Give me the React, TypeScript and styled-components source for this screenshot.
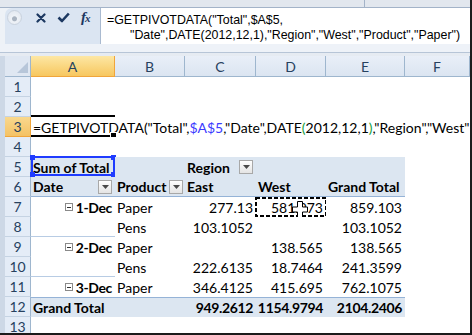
import React from 'react';
import styled, { createGlobalStyle } from 'styled-components';

const GlobalStyle = createGlobalStyle`
  html, body {
    margin: 0;
    padding: 0;
    background: #ffffff;
  }
  body {
    width: 472px;
    height: 335px;
    overflow: hidden;
  }
`;

const Frame = styled.div`
  width: 472px;
  height: 335px;
  box-sizing: border-box;
  border-right: 2px solid #1b1b1b;
  border-bottom: 2px solid #1b1b1b;
  background: #dde5f0;
  display: flex;
  flex-direction: column;
  overflow: hidden;
  font-family: Lato, 'Open Sans', sans-serif;
`;

/* ---------- formula bar ---------- */

const TopStrip = styled.div`
  height: 7px;
  background: #e2e7ee;
  border-bottom: 1px solid #a3b3c8;
  display: flex;
  justify-content: flex-end;
`;

const StripDivider = styled.span`
  width: 1px;
  height: 100%;
  background: #a3b3c8;
  margin-right: 105px;
`;

const FormulaRow = styled.div`
  display: flex;
  height: 36px;
  padding-left: 5px;
  background: #eef2f7;
`;

const Controls = styled.div`
  width: 95px;
  flex-shrink: 0;
  background: #dbe5f2;
  border-top-left-radius: 7px;
  padding: 1px 0 0 2px;
  box-sizing: border-box;
`;

const IconRow = styled.div`
  display: flex;
  align-items: center;
  height: 17px;
  gap: 11px;
`;

const NameHandle = styled.span`
  width: 15px;
  height: 15px;
  border-radius: 50%;
  box-sizing: border-box;
  border: 1px solid #c9d2de;
  background: radial-gradient(circle at 50% 60%, #aab4c1 0 2px, #eef2f7 3px, #dfe5ee 100%);
  margin-right: 3px;
`;

const FxLabel = styled.span`
  font-family: 'Liberation Serif', serif;
  font-style: italic;
  font-weight: 700;
  font-size: 15px;
  color: #1c3861;
  letter-spacing: -1px;
  line-height: 1;
  small {
    font-size: 11px;
  }
`;

const FormulaInput = styled.div`
  flex: 1;
  background: #ffffff;
  border-left: 1px solid #a9bad0;
  padding: 5px 0 0 6px;
  font-family: 'Liberation Sans', Arial, sans-serif;
  font-size: 12.4px;
  line-height: 15px;
  color: #000;
  white-space: nowrap;
`;

const FormulaLine = styled.div<{ $indent?: number }>`
  padding-left: ${p => p.$indent ?? 0}px;
`;

const BelowBar = styled.div`
  height: 8px;
  background: #eef2f8;
  border-bottom: 1px solid #b7c5d7;
`;

const Spacer = styled.div`
  height: 3px;
  background: #e6ebf2;
`;

/* ---------- sheet grid ---------- */

const SheetWrap = styled.div`
  flex: 1;
  padding-left: 5px;
  background: #cdd8e6;
  overflow: hidden;
`;

const Sheet = styled.div`
  display: grid;
  grid-template-columns: 26px 84px 70px 71px 70px 79px minmax(0, 1fr);
  grid-template-rows: 21px;
  grid-auto-rows: 20px;
  background: #ffffff;
  font-size: 14px;
  color: #000;
`;

const Corner = styled.div`
  background: #dfe7f2;
  border-right: 1px solid #9eb6ce;
  border-bottom: 1px solid #9eb6ce;
  display: flex;
  align-items: flex-end;
  justify-content: flex-end;
  padding: 0 2px 3px 0;
`;

const ColHeader = styled.div<{ $active?: boolean }>`
  display: flex;
  align-items: center;
  justify-content: center;
  box-sizing: border-box;
  color: #27415f;
  background: ${p => (p.$active ? 'linear-gradient(#fde7a4, #f7c75f)' : 'linear-gradient(#e9eff8, #dbe5f1)')};
  border-right: 1px solid ${p => (p.$active ? '#f0a53b' : '#9eb6ce')};
  border-bottom: 1px solid ${p => (p.$active ? '#f0a53b' : '#9eb6ce')};
`;

const RowHeader = styled.div<{ $active?: boolean }>`
  display: flex;
  align-items: center;
  justify-content: center;
  box-sizing: border-box;
  color: #27415f;
  background: ${p => (p.$active ? 'linear-gradient(#f9d88e, #f4c265)' : '#e4ecf7')};
  border-right: 1px solid ${p => (p.$active ? '#f0a53b' : '#9eb6ce')};
  border-bottom: 1px solid ${p => (p.$active ? '#f0a53b' : '#c5d3e3')};
`;

const Cell = styled.div<{
  $align?: 'left' | 'right' | 'split';
  $bold?: boolean;
  $band?: boolean;
  $ruleTop?: boolean;
  $ruleBottom?: boolean;
  $groupRule?: boolean;
}>`
  position: relative;
  display: flex;
  align-items: center;
  justify-content: ${p => (p.$align === 'right' ? 'flex-end' : p.$align === 'split' ? 'space-between' : 'flex-start')};
  gap: 3px;
  box-sizing: border-box;
  padding: 0 3px 0 2px;
  white-space: nowrap;
  font-weight: ${p => (p.$bold ? 700 : 400)};
  letter-spacing: ${p => (p.$bold && p.$align === 'right' ? '-0.35px' : 'normal')};
  background: ${p => (p.$band ? '#dce6f1' : '#ffffff')};
  border-top: ${p => (p.$ruleTop ? '1px solid #95b3d7' : 'none')};
  border-bottom: ${p => (p.$ruleBottom ? '1px solid #95b3d7' : p.$groupRule ? '1px solid #b8cce4' : 'none')};
`;

const FormulaCell = styled.div`
  position: relative;
  grid-column: span 6;
  min-width: 0;
`;

const FormulaText = styled.div`
  height: 100%;
  display: flex;
  align-items: center;
  padding-left: 2px;
  white-space: nowrap;
  overflow: hidden;
`;

const Ref = styled.span`
  color: #3b3bff;
`;

const Paren = styled.span`
  color: #14a03c;
`;

const ActiveBox = styled.span`
  position: absolute;
  left: 0;
  top: -2px;
  width: 84px;
  height: 22px;
  box-sizing: border-box;
  border-top: 2px solid #000;
  border-bottom: 2px solid #000;
  pointer-events: none;
`;

const FillHandle = styled.span`
  position: absolute;
  right: -2px;
  bottom: -4px;
  width: 5px;
  height: 5px;
  background: #000;
  border: 1px solid #fff;
`;

const RangeBox = styled.span`
  position: absolute;
  left: 0;
  top: -1px;
  right: 0;
  bottom: 1px;
  border: 2px solid #1f3cff;
  pointer-events: none;
`;

const RangeHandle = styled.span<{ $x: 'l' | 'r'; $y: 't' | 'b' }>`
  position: absolute;
  width: 5px;
  height: 5px;
  background: #1f3cff;
  ${p => (p.$x === 'l' ? 'left: -3px;' : 'right: -3px;')}
  ${p => (p.$y === 't' ? 'top: -3px;' : 'bottom: -3px;')}
`;

const DropButton = styled.span`
  width: 14px;
  height: 14px;
  flex-shrink: 0;
  box-sizing: border-box;
  border: 1px solid #a8a8a8;
  background: linear-gradient(#ffffff, #e4e4e4);
  display: inline-flex;
  align-items: center;
  justify-content: center;
`;

const CollapseBox = styled.span`
  width: 8px;
  height: 8px;
  box-sizing: border-box;
  border: 1px solid #8a8a8a;
  background: #fff;
  display: inline-flex;
  align-items: center;
  justify-content: center;
  &::after {
    content: '';
    width: 4px;
    height: 1px;
    background: #333;
  }
`;

const Ants = styled.svg`
  position: absolute;
  left: -1px;
  top: 0;
  pointer-events: none;
`;

const Cursor = styled.svg`
  position: absolute;
  left: 36px;
  top: 4px;
  pointer-events: none;
`;

const Drop = () => (
  <DropButton>
    <svg width="7" height="4" viewBox="0 0 7 4">
      <path d="M0 0 H7 L3.5 4 Z" fill="#4a4a4a" />
    </svg>
  </DropButton>
);

const cols = ['A', 'B', 'C', 'D', 'E', 'F'];

const BlankRow: React.FC<{ n: number }> = ({ n }) => (
  <>
    <RowHeader>{n}</RowHeader>
    {cols.map(c => (
      <Cell key={c} />
    ))}
  </>
);

type BodyRow = {
  n: number;
  date?: string;
  product: string;
  east: string;
  west: string;
  total: string;
  groupEnd?: boolean;
  copied?: boolean;
};

const bodyRows: BodyRow[] = [
  { n: 7, date: '1-Dec', product: 'Paper', east: '277.13', west: '581.973', total: '859.103', copied: true },
  { n: 8, product: 'Pens', east: '103.1052', west: '', total: '103.1052', groupEnd: true },
  { n: 9, date: '2-Dec', product: 'Paper', east: '', west: '138.565', total: '138.565' },
  { n: 10, product: 'Pens', east: '222.6135', west: '18.7464', total: '241.3599', groupEnd: true },
  { n: 11, date: '3-Dec', product: 'Paper', east: '346.4125', west: '415.695', total: '762.1075' },
];

const App: React.FC = () => (
  <Frame>
    <GlobalStyle />
    <TopStrip>
      <StripDivider />
    </TopStrip>
    <FormulaRow>
      <Controls>
        <IconRow>
          <NameHandle />
          <svg width="10" height="10" viewBox="0 0 10 10">
            <path d="M1.5 1.5 L8.5 8.5 M8.5 1.5 L1.5 8.5" stroke="#1c3861" strokeWidth="2.2" strokeLinecap="round" />
          </svg>
          <svg width="13" height="11" viewBox="0 0 13 11">
            <path d="M1.5 5.5 L5 9 L11.8 1.5" stroke="#1c3861" strokeWidth="2.6" fill="none" strokeLinejoin="round" />
          </svg>
          <FxLabel>
            f<small>x</small>
          </FxLabel>
        </IconRow>
      </Controls>
      <FormulaInput>
        <FormulaLine>=GETPIVOTDATA("Total",$A$5,</FormulaLine>
        <FormulaLine $indent={23}>"Date",DATE(2012,12,1),"Region","West","Product","Paper")</FormulaLine>
      </FormulaInput>
    </FormulaRow>
    <BelowBar />
    <Spacer />
    <SheetWrap>
      <Sheet>
        <Corner>
          <svg width="11" height="11" viewBox="0 0 11 11">
            <path d="M11 0 V11 H0 Z" fill="#b7c6d9" />
          </svg>
        </Corner>
        {cols.map(c => (
          <ColHeader key={c} $active={c === 'A'}>
            {c}
          </ColHeader>
        ))}

        <BlankRow n={1} />
        <BlankRow n={2} />

        <RowHeader $active>3</RowHeader>
        <FormulaCell>
          <FormulaText>
            =GETPIVOTDATA("Total",<Ref>$A$5</Ref>,"Date",DATE<Paren>(</Paren>2012,12,1<Paren>)</Paren>,"Region","West"
          </FormulaText>
          <ActiveBox>
            <FillHandle />
          </ActiveBox>
        </FormulaCell>

        <BlankRow n={4} />

        <RowHeader>5</RowHeader>
        <Cell $band $bold>
          Sum of Total
          <RangeBox>
            <RangeHandle $x="l" $y="t" />
            <RangeHandle $x="r" $y="t" />
            <RangeHandle $x="l" $y="b" />
            <RangeHandle $x="r" $y="b" />
          </RangeBox>
        </Cell>
        <Cell $band />
        <Cell $band $bold $align="split">
          Region
          <Drop />
        </Cell>
        <Cell $band />
        <Cell $band />
        <Cell />

        <RowHeader>6</RowHeader>
        <Cell $band $bold $ruleBottom $align="split">
          Date
          <Drop />
        </Cell>
        <Cell $band $bold $ruleBottom $align="split">
          Product
          <Drop />
        </Cell>
        <Cell $band $bold $ruleBottom>East</Cell>
        <Cell $band $bold $ruleBottom>West</Cell>
        <Cell $band $bold $ruleBottom>Grand Total</Cell>
        <Cell />

        {bodyRows.map(r => (
          <React.Fragment key={r.n}>
            <RowHeader>{r.n}</RowHeader>
            <Cell $align="right" $bold $groupRule={r.groupEnd}>
              {r.date && (
                <>
                  <CollapseBox />
                  {r.date}
                </>
              )}
            </Cell>
            <Cell>{r.product}</Cell>
            <Cell $align="right">{r.east}</Cell>
            <Cell $align="right">
              {r.west}
              {r.copied && (
                <>
                  <Ants width="72" height="20" viewBox="0 0 72 20">
                    <rect x="1" y="1" width="70" height="18" fill="none" stroke="#000" strokeWidth="2" strokeDasharray="4 2" />
                  </Ants>
                  <Cursor width="16" height="17" viewBox="0 0 16 17">
                    <path d="M5.5 0.5 H10.5 V6 H15.5 V11 H10.5 V16.5 H5.5 V11 H0.5 V6 H5.5 Z" fill="#fff" stroke="#000" strokeWidth="1" />
                  </Cursor>
                </>
              )}
            </Cell>
            <Cell $align="right">{r.total}</Cell>
            <Cell />
          </React.Fragment>
        ))}

        <RowHeader>12</RowHeader>
        <Cell $band $bold $ruleTop>Grand Total</Cell>
        <Cell $band $ruleTop />
        <Cell $band $bold $ruleTop $align="right">949.2612</Cell>
        <Cell $band $bold $ruleTop $align="right">1154.9794</Cell>
        <Cell $band $bold $ruleTop $align="right">2104.2406</Cell>
        <Cell />

        <BlankRow n={13} />
      </Sheet>
    </SheetWrap>
  </Frame>
);

export default App;
